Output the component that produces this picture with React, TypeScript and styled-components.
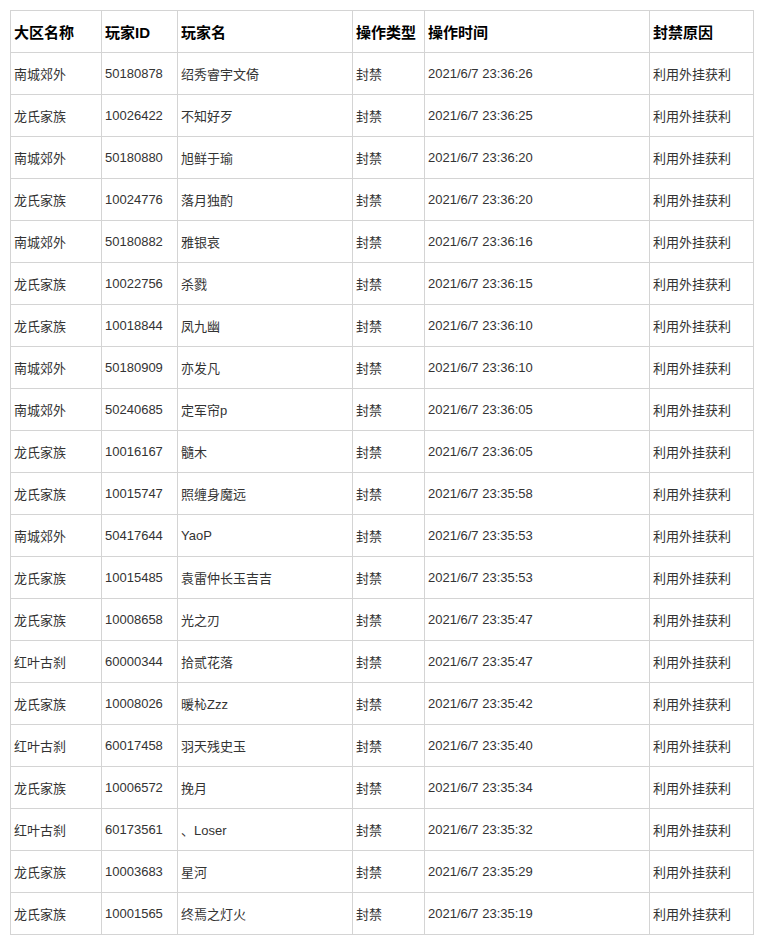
import React from "react";
import styled, { createGlobalStyle } from "styled-components";

const GlobalStyle = createGlobalStyle`
  html, body {
    margin: 0;
    padding: 0;
    background: #ffffff;
  }
  body {
    font-family: "Liberation Sans", "Noto Sans CJK SC", sans-serif;
  }
`;

interface BanRecord {
  zone: string;
  playerId: string;
  playerName: string;
  action: string;
  time: string;
  reason: string;
}

const COLUMNS = [
  { label: "大区名称", width: 91 },
  { label: "玩家ID", width: 76 },
  { label: "玩家名", width: 175 },
  { label: "操作类型", width: 72 },
  { label: "操作时间", width: 225 },
  { label: "封禁原因", width: 104 },
];

const rows: [string, string, string, string][] = [
  ["南城郊外", "50180878", "绍秀睿宇文倚", "23:36:26"],
  ["龙氏家族", "10026422", "不知好歹", "23:36:25"],
  ["南城郊外", "50180880", "旭鲜于瑜", "23:36:20"],
  ["龙氏家族", "10024776", "落月独酌", "23:36:20"],
  ["南城郊外", "50180882", "雅银哀", "23:36:16"],
  ["龙氏家族", "10022756", "杀戮", "23:36:15"],
  ["龙氏家族", "10018844", "凤九幽", "23:36:10"],
  ["南城郊外", "50180909", "亦发凡", "23:36:10"],
  ["南城郊外", "50240685", "定军帘p", "23:36:05"],
  ["龙氏家族", "10016167", "髓木", "23:36:05"],
  ["龙氏家族", "10015747", "照缠身魔远", "23:35:58"],
  ["南城郊外", "50417644", "YaoP", "23:35:53"],
  ["龙氏家族", "10015485", "袁雷仲长玉吉吉", "23:35:53"],
  ["龙氏家族", "10008658", "光之刃", "23:35:47"],
  ["红叶古刹", "60000344", "拾贰花落", "23:35:47"],
  ["龙氏家族", "10008026", "暖杺Zzz", "23:35:42"],
  ["红叶古刹", "60017458", "羽天残史玉", "23:35:40"],
  ["龙氏家族", "10006572", "挽月", "23:35:34"],
  ["红叶古刹", "60173561", "、Loser", "23:35:32"],
  ["龙氏家族", "10003683", "星河", "23:35:29"],
  ["龙氏家族", "10001565", "终焉之灯火", "23:35:19"],
];

const RECORDS: BanRecord[] = rows.map(([zone, playerId, playerName, t]) => ({
  zone,
  playerId,
  playerName,
  action: "封禁",
  time: `2021/6/7 ${t}`,
  reason: "利用外挂获利",
}));

const Page = styled.div`
  padding: 10px 0 0 10px;
`;

const Table = styled.table`
  border-collapse: collapse;
  table-layout: fixed;
  width: 744px;
  border: 1px solid #d4d4d4;
`;

const HeadCell = styled.th`
  height: 41px;
  padding: 0 3px;
  border: 1px solid #d4d4d4;
  text-align: left;
  vertical-align: middle;
  font-size: 15px;
  font-weight: 700;
  color: #000;
  white-space: nowrap;
`;

const Cell = styled.td`
  height: 41px;
  padding: 0 3px;
  border: 1px solid #d4d4d4;
  vertical-align: middle;
  font-size: 13px;
  color: #333;
  white-space: nowrap;
`;

export default function App() {
  return (
    <Page>
      <GlobalStyle />
      <Table>
        <colgroup>
          {COLUMNS.map((c) => (
            <col key={c.label} style={{ width: c.width }} />
          ))}
        </colgroup>
        <thead>
          <tr>
            {COLUMNS.map((c) => (
              <HeadCell key={c.label}>{c.label}</HeadCell>
            ))}
          </tr>
        </thead>
        <tbody>
          {RECORDS.map((r, i) => (
            <tr key={i}>
              <Cell>{r.zone}</Cell>
              <Cell>{r.playerId}</Cell>
              <Cell>{r.playerName}</Cell>
              <Cell>{r.action}</Cell>
              <Cell>{r.time}</Cell>
              <Cell>{r.reason}</Cell>
            </tr>
          ))}
        </tbody>
      </Table>
    </Page>
  );
}
